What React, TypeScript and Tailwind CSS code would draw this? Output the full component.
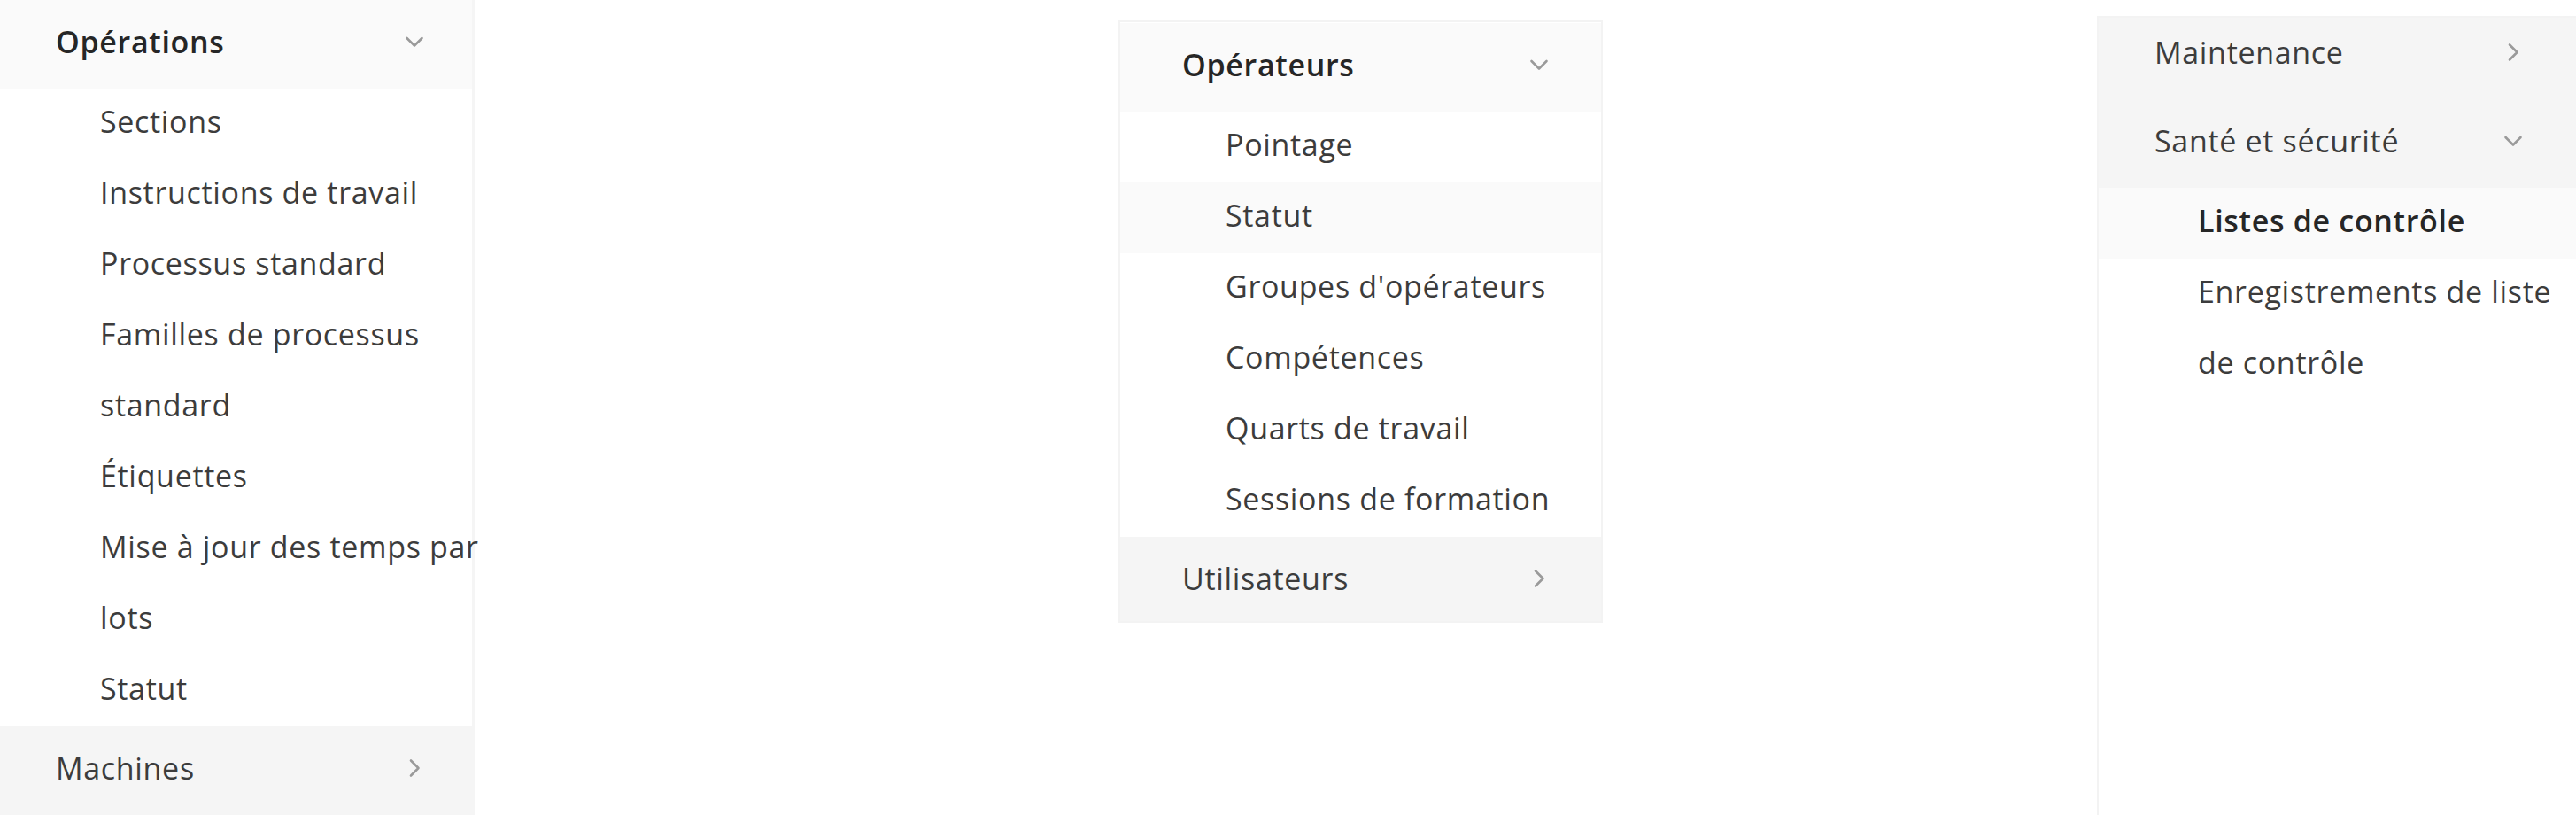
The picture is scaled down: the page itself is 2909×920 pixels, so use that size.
import React from 'react';

type SubItem = { label: string; state?: 'hover' | 'selected' };

type Group = {
  label: string;
  open: boolean;
  tone: 'open' | 'grey';
  bold?: boolean;
  items?: SubItem[];
};

type PanelLayout = {
  grid: string;
  headerPad: string;
  subPad: string;
  textWidth: string;
};

const font = { fontFamily: '"Open Sans", "Noto Sans", Arial, sans-serif' };

const ChevronDown = () => (
  <svg width="24" height="24" viewBox="0 0 24 24" fill="none">
    <polyline points="3.5,8 12,16.5 20.5,8" stroke="#9a9a9a" strokeWidth="2.6" strokeLinecap="round" strokeLinejoin="round" />
  </svg>
);

const ChevronRight = () => (
  <svg width="24" height="24" viewBox="0 0 24 24" fill="none">
    <polyline points="8,3.5 16.5,12 8,20.5" stroke="#9a9a9a" strokeWidth="2.6" strokeLinecap="round" strokeLinejoin="round" />
  </svg>
);

const MenuGroup: React.FC<{ group: Group; layout: PanelLayout; className?: string }> = ({ group, layout, className }) => (
  <div>
    <div
      className={`grid h-[100px] items-center pb-[6px] ${layout.grid} ${
        group.tone === 'open' ? 'bg-[#fafafa]' : 'bg-[#f5f5f5]'
      } ${className ?? ''}`}
    >
      <span
        className={`${layout.headerPad} text-[34px] tracking-[0.02em] whitespace-nowrap ${
          group.bold ? 'font-semibold text-[#262626]' : 'text-[#3c3c3c]'
        }`}
      >
        {group.label}
      </span>
      {group.open ? <ChevronDown /> : <ChevronRight />}
    </div>
    {group.open &&
      group.items?.map((item) => (
        <div
          key={item.label}
          className={`${layout.subPad} ${item.state ? 'bg-[#fafafa]' : ''}`}
        >
          <div
            className={`relative -top-[3px] ${layout.textWidth} leading-[80px] text-[34px] tracking-[0.02em] ${
              item.state === 'selected' ? 'font-semibold text-[#262626]' : 'text-[#3c3c3c]'
            }`}
          >
            {item.label}
          </div>
        </div>
      ))}
  </div>
);

const leftLayout: PanelLayout = {
  grid: 'grid-cols-[456px_24px]',
  headerPad: 'pl-[63px]',
  subPad: 'pl-[113px]',
  textWidth: 'w-[440px]',
};

const middleLayout: PanelLayout = {
  grid: 'grid-cols-[461px_24px]',
  headerPad: 'pl-[70px]',
  subPad: 'pl-[119px]',
  textWidth: 'w-[420px]',
};

const rightLayout: PanelLayout = {
  grid: 'grid-cols-[456px_24px]',
  headerPad: 'pl-[63px]',
  subPad: 'pl-[112px]',
  textWidth: 'w-[430px]',
};

const operations: Group = {
  label: 'Opérations',
  open: true,
  tone: 'open',
  bold: true,
  items: [
    { label: 'Sections' },
    { label: 'Instructions de travail' },
    { label: 'Processus standard' },
    { label: 'Familles de processus standard' },
    { label: 'Étiquettes' },
    { label: 'Mise à jour des temps par lots' },
    { label: 'Statut' },
  ],
};

const operateurs: Group = {
  label: 'Opérateurs',
  open: true,
  tone: 'open',
  bold: true,
  items: [
    { label: 'Pointage' },
    { label: 'Statut', state: 'hover' },
    { label: "Groupes d'opérateurs" },
    { label: 'Compétences' },
    { label: 'Quarts de travail' },
    { label: 'Sessions de formation' },
  ],
};

const sante: Group = {
  label: 'Santé et sécurité',
  open: true,
  tone: 'grey',
  items: [
    { label: 'Listes de contrôle', state: 'selected' },
    { label: 'Enregistrements de liste de contrôle' },
  ],
};

export default function App() {
  return (
    <div className="flex w-full h-[920px] overflow-hidden bg-white antialiased" style={font}>
      {/* left sidebar */}
      <div className="w-[536px] shrink-0 border-r-[3px] border-[#f5f5f5]">
        <MenuGroup group={operations} layout={leftLayout} />
        <MenuGroup group={{ label: 'Machines', open: false, tone: 'grey' }} layout={leftLayout} />
      </div>

      {/* middle panel */}
      <div className="ml-[727px] mt-[23px] w-[547px] h-[680px] shrink-0 overflow-hidden border-2 border-[#f3f3f3]">
        <div className="pt-[1px]">
          <MenuGroup group={operateurs} layout={middleLayout} />
          <MenuGroup group={{ label: 'Utilisateurs', open: false, tone: 'grey' }} layout={middleLayout} />
        </div>
      </div>

      {/* right panel, scrolled a little */}
      <div className="ml-[558px] mt-[18px] flex-1 overflow-hidden border-l-2 border-t-2 border-[#f3f3f3]">
        <MenuGroup group={{ label: 'Maintenance', open: false, tone: 'grey' }} layout={rightLayout} className="-mt-[8px]" />
        <MenuGroup group={sante} layout={rightLayout} />
      </div>
    </div>
  );
}
